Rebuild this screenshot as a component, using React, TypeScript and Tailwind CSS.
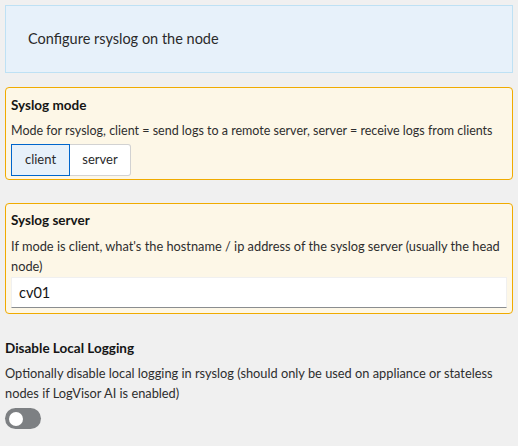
export default function App() {
  return (
    <div
      className="min-h-[446px] w-[518px] bg-[#f0f0f0] px-[5px] pt-[5px] text-[#151515]"
      style={{ fontFamily: 'Lato, "Open Sans", sans-serif' }}
    >
      <div className="flex h-[68px] items-center border border-[#bee1f4] bg-[#e7f1fa] pl-[22px] text-[14.5px] text-[#2a2a2a]">
        Configure rsyslog on the node
      </div>

      <div className="mt-[14px] rounded-[4px] border border-[#f0ab00] bg-[#fdf7e7] px-[5px] pb-[3px] pt-[6px]">
        <div className="text-[13.5px] font-bold leading-[22px]">Syslog mode</div>
        <div className="mt-[4px] whitespace-nowrap text-[12.5px] leading-[22px] text-[#2e2e2e]">
          Mode for rsyslog, client = send logs to a remote server, server = receive logs from clients
        </div>
        <div className="mt-[2px] flex">
          <button className="h-[32px] w-[59px] border border-[#0066cc] bg-[#e7f1fa] text-[13px] text-[#2a2a2a]">
            client
          </button>
          <button className="h-[32px] w-[61px] rounded-r-[3px] border border-l-0 border-[#d2d2d2] bg-white text-[13px] text-[#2a2a2a]">
            server
          </button>
        </div>
      </div>

      <div className="mt-[23px] rounded-[4px] border border-[#f0ab00] bg-[#fdf7e7] px-[5px] pb-[5px] pt-[6px]">
        <div className="text-[13.5px] font-bold leading-[20px]">Syslog server</div>
        <div className="mt-[6px] text-[12.8px] leading-[20px] text-[#2e2e2e]">
          If mode is client, what's the hostname / ip address of the syslog server (usually the head node)
        </div>
        <div className="mt-[1px] flex h-[31px] items-center border border-[#f0f0f0] border-b-[#8a8d90] bg-white pl-[7px] text-[14.5px] text-[#151515]">
          cv01
        </div>
      </div>

      <div className="mt-[23px] text-[13.5px] font-bold leading-[22px]">Disable Local Logging</div>
      <div className="mt-[4px] pr-[10px] text-[12.8px] leading-[20px] text-[#2e2e2e]">
        Optionally disable local logging in rsyslog (should only be used on appliance or stateless nodes if LogVisor AI is enabled)
      </div>
      <div className="mt-[5px] flex h-[21px] w-[36px] items-center rounded-full bg-[#7d8083] pl-[4px]">
        <div className="h-[14px] w-[14px] rounded-full bg-white" />
      </div>
    </div>
  )
}
